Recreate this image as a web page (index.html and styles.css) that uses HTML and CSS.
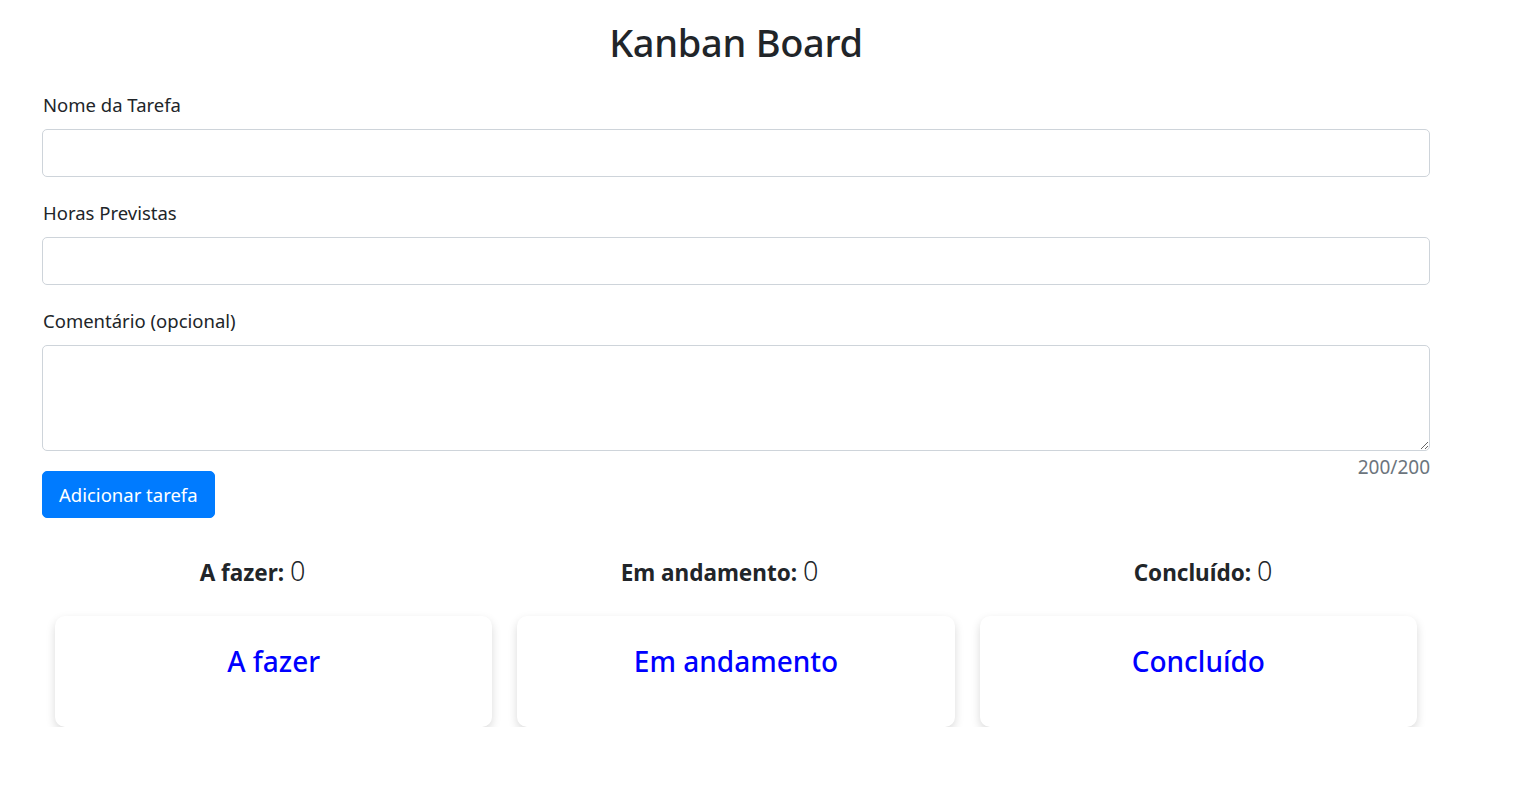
FILE: index.html
```html
<!DOCTYPE html>
<html lang="pt-BR">
<head>
<meta charset="utf-8">
<title>Kanban Board</title>
<link rel="stylesheet" href="styles.css">
</head>
<body>
<div class="page">
  <h1 class="title">Kanban Board</h1>
  <form class="task-form">
    <div class="field">
      <label class="label" for="nome">Nome da Tarefa</label>
      <input class="control" id="nome" type="text">
    </div>
    <div class="field">
      <label class="label" for="horas">Horas Previstas</label>
      <input class="control" id="horas" type="text">
    </div>
    <div class="field field-last">
      <label class="label" for="coment">Comentário (opcional)</label>
      <textarea class="control area" id="coment"></textarea>
      <div class="counter">200/200</div>
    </div>
    <button class="btn" type="button">Adicionar tarefa</button>
  </form>
  <div class="stats">
    <div class="stat"><strong>A fazer:</strong> <span class="num">0</span></div>
    <div class="stat"><strong>Em andamento:</strong> <span class="num">0</span></div>
    <div class="stat"><strong>Concluído:</strong> <span class="num">0</span></div>
  </div>
  <div class="board">
    <div class="column"><h2 class="col-title">A fazer</h2></div>
    <div class="column"><h2 class="col-title">Em andamento</h2></div>
    <div class="column"><h2 class="col-title">Concluído</h2></div>
  </div>
</div>
</body>
</html>
```

FILE: styles.css
```css
* { box-sizing: border-box; }
html, body { margin: 0; padding: 0; background: #fff; }
body {
  font-family: "Noto Sans", "Open Sans", "DejaVu Sans", sans-serif;
  color: #212529;
  font-size: 16px;
}
.page {
  width: 1388px;
  margin-left: 42px;
  padding-top: 16px;
}
.title {
  margin: 0 0 25px;
  text-align: center;
  font-size: 38px;
  font-weight: 500;
  line-height: 52px;
  letter-spacing: -0.3px;
}
.task-form { display: flex; flex-direction: column; align-items: flex-start; }
.field { width: 100%; margin-bottom: 24px; }
.field-last { margin-bottom: 0; }
.label {
  display: block;
  font-size: 18.5px;
  line-height: 24px;
  margin-bottom: 12px;
  padding-left: 1px;
}
.control {
  display: block;
  width: 100%;
  height: 48px;
  border: 1px solid #ced4da;
  border-radius: 5px;
  font-size: 20px;
  padding: 8px 16px;
  background: #fff;
}
.area { height: 106px; resize: vertical; }
.counter {
  text-align: right;
  font-size: 19px;
  height: 20px;
  line-height: 32px;
  color: #6c757d;
}
.btn {
  position: relative;
  height: 47px;
  padding: 0 16px;
  border: 1px solid #007bff;
  border-radius: 5px;
  background: #007bff;
  color: #fff;
  font-family: inherit;
  font-size: 18.5px;
  cursor: pointer;
}
.stats {
  display: flex;
  justify-content: space-around;
  margin-top: 39px;
  height: 30px;
  align-items: center;
}
.stat { font-size: 22.5px; line-height: 30px; }
.stat strong { font-weight: 700; }
.num { font-size: 27px; font-weight: 300; }
.board {
  display: flex;
  gap: 25px;
  padding: 0 13px;
  margin-top: 29px;
}
.column {
  flex: 1;
  height: 111px;
  border-radius: 10px;
  background: #fff;
  box-shadow: 0 4px 10px rgba(0, 0, 0, 0.15);
  padding-top: 25px;
}
.col-title {
  margin: 0;
  text-align: center;
  color: #0000ff;
  font-size: 28px;
  font-weight: 500;
  line-height: 40px;
}
```
